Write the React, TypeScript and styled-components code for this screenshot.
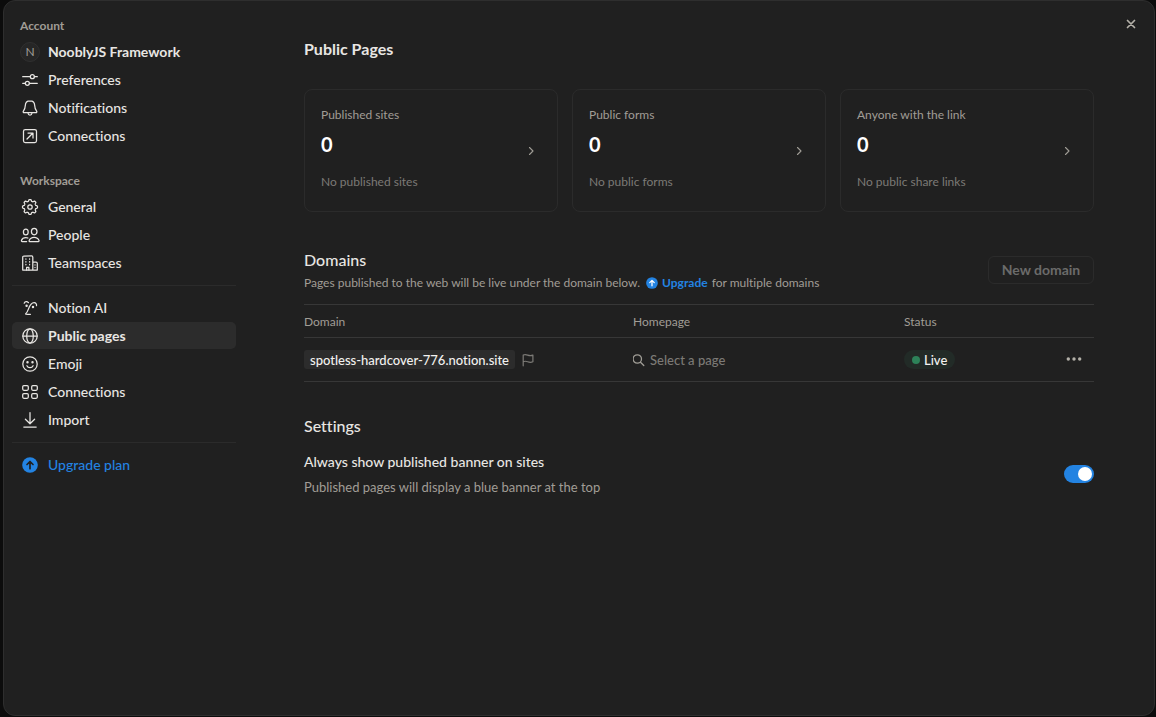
import React, { useState } from "react";
import styled, { createGlobalStyle, css } from "styled-components";

const color = {
  backdrop: "#0c0c0c",
  panel: "#202020",
  panelEdge: "#2e2e2e",
  line: "#373737",
  softLine: "#2b2b2b",
  raised: "#2c2c2c",
  text: "#e8e6e3",
  strong: "#f2f1ef",
  muted: "#a09d96",
  faint: "#7c7a76",
  disabled: "#6b6b6a",
  blue: "#2383e2",
};

const GlobalStyle = createGlobalStyle`
  *, *::before, *::after { box-sizing: border-box; }
  body {
    margin: 0;
    background: ${color.backdrop};
    color: ${color.text};
    font-family: Lato, "Open Sans", sans-serif;
    font-size: 14px;
    line-height: 20px;
    font-variant-ligatures: none;
  }
  button, input { font: inherit; color: inherit; }
  h1, h2, h3, p { margin: 0; }
`;

const Dialog = styled.div`
  position: relative;
  display: flex;
  min-height: calc(100vh - 1px);
  margin: 0 1px 1px 3px;
  background: ${color.panel};
  border: 1px solid ${color.panelEdge};
  border-radius: 12px;
`;

const Sidebar = styled.nav`
  flex: 0 0 240px;
  padding: 15px 8px;
`;

const GroupLabel = styled.h3<{ $spaced?: boolean }>`
  padding: 0 8px;
  margin: ${(p) => (p.$spaced ? "22px 0 2px" : "0 0 2px")};
  font-size: 12px;
  font-weight: 700;
  line-height: 20px;
  color: ${color.muted};
`;

const NavList = styled.ul`
  margin: 0;
  padding: 0;
  list-style: none;
`;

const NavLink = styled.a<{ $active?: boolean; $strong?: boolean; $accent?: boolean }>`
  display: flex;
  align-items: center;
  gap: 8px;
  height: 27px;
  margin-bottom: 1px;
  padding: 0 8px;
  border-radius: 5px;
  color: ${(p) => (p.$accent ? color.blue : color.text)};
  font-weight: ${(p) => (p.$active || p.$strong ? 700 : 500)};
  text-decoration: none;
  ${(p) =>
    p.$active &&
    css`
      background: ${color.raised};
    `}
  svg { flex: none; }
`;

const NavDivider = styled.hr`
  height: 1px;
  margin: 9px 0 8px;
  border: 0;
  background: ${color.softLine};
`;

const Avatar = styled.span`
  display: grid;
  place-items: center;
  flex: none;
  width: 20px;
  height: 20px;
  border: 1px solid #303030;
  border-radius: 50%;
  background: #262626;
  color: ${color.muted};
  font-size: 12px;
  font-weight: 400;
  line-height: 18px;
`;

const CloseButton = styled.button`
  position: absolute;
  top: 13px;
  right: 13px;
  display: grid;
  place-items: center;
  width: 20px;
  height: 20px;
  padding: 0;
  border: 0;
  background: none;
  color: #b3b0a8;
`;

const Main = styled.main`
  flex: 1;
  min-width: 0;
  padding: 36px 60px;
`;

const PageTitle = styled.h1`
  font-size: 16px;
  font-weight: 700;
  line-height: 24px;
`;

const Cards = styled.div`
  display: grid;
  grid-template-columns: repeat(3, 1fr);
  gap: 14px;
  margin-top: 28px;
`;

const Card = styled.button`
  display: flex;
  align-items: center;
  justify-content: space-between;
  padding: 15px 16px;
  border: 1px solid ${color.softLine};
  border-radius: 8px;
  background: none;
  text-align: left;
  svg { margin-right: 4px; color: ${color.muted}; }
`;

const CardBody = styled.span`
  display: flex;
  flex-direction: column;
`;

const CardLabel = styled.span`
  font-size: 12px;
  line-height: 20px;
  color: ${color.muted};
`;

const CardCount = styled.span`
  margin: 5px 0 14px;
  font-size: 20px;
  font-weight: 700;
  line-height: 28px;
  color: #fff;
`;

const CardNote = styled(CardLabel)`
  padding-bottom: 4px;
  color: ${color.faint};
`;

const SectionHead = styled.div`
  display: flex;
  align-items: flex-start;
  justify-content: space-between;
  margin-top: 36px;
`;

const SectionTitle = styled.h2`
  font-size: 16px;
  font-weight: 500;
  line-height: 24px;
  color: ${color.text};
`;

const Hint = styled.p`
  display: flex;
  align-items: center;
  flex-wrap: wrap;
  font-size: 12px;
  line-height: 22px;
  color: ${color.muted};
`;

const UpgradeLink = styled.a`
  display: inline-flex;
  align-items: center;
  gap: 4px;
  margin: 0 4px 0 6px;
  color: ${color.blue};
  font-weight: 700;
  text-decoration: none;
`;

const NewDomain = styled.button`
  flex: none;
  min-width: 106px;
  height: 28px;
  margin-top: 8px;
  padding: 0 12px;
  border: 1px solid ${color.softLine};
  border-radius: 6px;
  background: none;
  color: ${color.disabled};
  font-weight: 700;
  line-height: 20px;
`;

const Table = styled.table`
  width: 100%;
  margin-top: 10px;
  border-collapse: collapse;
  table-layout: fixed;
  th, td {
    padding: 0;
    border-top: 1px solid ${color.line};
    border-bottom: 1px solid ${color.line};
    text-align: left;
    vertical-align: middle;
  }
  th {
    height: 33px;
    padding-top: 2px;
    font-size: 12px;
    font-weight: 400;
    color: ${color.muted};
  }
  td {
    height: 44px;
    font-size: 13px;
    font-weight: 500;
  }
`;

const Col = styled.col<{ $width?: number }>`
  ${(p) => p.$width && `width: ${p.$width}px;`}
`;

const CellRow = styled.div`
  display: flex;
  align-items: center;
  gap: 6px;
`;

const DomainTag = styled.span`
  height: 19px;
  padding: 0 6px;
  border-radius: 3px;
  background: ${color.raised};
  color: ${color.strong};
  line-height: 20px;
`;

const PagePicker = styled.button`
  display: flex;
  align-items: center;
  gap: 3px;
  padding: 0;
  border: 0;
  background: none;
  color: ${color.faint};
  svg { color: ${color.muted}; }
`;

const Live = styled.span`
  display: flex;
  align-items: center;
  gap: 4px;
  width: max-content;
  height: 19px;
  padding: 0 8px;
  border-radius: 10px;
  background: #222b27;
  color: ${color.strong};
  line-height: 20px;
  &::before {
    content: "";
    width: 8px;
    height: 8px;
    border-radius: 50%;
    background: #2d8259;
  }
`;

const MoreButton = styled.button`
  display: grid;
  place-items: center;
  width: 40px;
  height: 24px;
  margin: 0 0 2px auto;
  padding: 0;
  border: 0;
  background: none;
  color: #b3b0a8;
`;

const Settings = styled.section`
  margin-top: 32px;
`;

const SettingRow = styled.div`
  display: flex;
  align-items: center;
  justify-content: space-between;
  margin-top: 13px;
`;

const SettingLabel = styled.label`
  display: block;
  margin-bottom: 5px;
  color: ${color.text};
  font-weight: 500;
  line-height: 21px;
`;

const SettingNote = styled.p`
  font-size: 13px;
  line-height: 20px;
  color: ${color.muted};
`;

const Switch = styled.input`
  appearance: none;
  flex: none;
  width: 30px;
  height: 18px;
  margin: 0;
  padding: 2px;
  border-radius: 9px;
  background: #5a5a5a;
  &::before {
    content: "";
    display: block;
    width: 14px;
    height: 14px;
    border-radius: 50%;
    background: #fff;
  }
  &:checked { background: ${color.blue}; }
  &:checked::before { margin-left: 12px; }
`;

type IconProps = { size?: number; box?: number; weight?: number; children: React.ReactNode };

const Icon = ({ size = 20, box = 20, weight = 1.25, children }: IconProps) => (
  <svg
    width={size}
    height={size}
    viewBox={`0 0 ${box} ${box}`}
    fill="none"
    stroke="currentColor"
    strokeWidth={weight}
    strokeLinecap="round"
    strokeLinejoin="round"
    aria-hidden="true"
  >
    {children}
  </svg>
);

// Eight-toothed outline, sampled around the centre of the 20px box.
const gearOutline =
  Array.from({ length: 96 }, (_, i) => {
    const angle = (i / 96) * Math.PI * 2;
    const wave = Math.max(-1, Math.min(1, Math.cos(angle * 8) * 1.8));
    const r = 6.7 + wave * 0.8;
    return `${i ? "L" : "M"}${(10 + r * Math.cos(angle)).toFixed(2)} ${(10 + r * Math.sin(angle)).toFixed(2)}`;
  }).join("") + "Z";

const SlidersIcon = () => (
  <Icon>
    <path d="M2.7 6.7h7.6M14.4 6.7h2.9M2.7 13.3h2.6M9.4 13.3h7.9" />
    <circle cx="12.35" cy="6.7" r="2" />
    <circle cx="7.35" cy="13.3" r="2" />
  </Icon>
);
const BellIcon = () => (
  <Icon>
    <path d="M10 2.900c-2.800 0-4.600 2-4.700 4.700-.1 3-.8 4.200-1.900 5.600-.5.700-.2 1.500.7 1.500h11.800c.9 0 1.200-.8.700-1.500-1.100-1.400-1.800-2.600-1.900-5.600C14.600 4.900 12.800 2.900 10 2.900Z" />
    <path d="M8 15c.2 1.500.9 2.200 2 2.200s1.800-.7 2-2.200" />
  </Icon>
);
const ArrowBoxIcon = () => (
  <Icon>
    <rect x="3.500" y="3.500" width="13" height="13" rx="1.800" />
    <path d="M7 13l5.700-5.700M8 7h5v5" />
  </Icon>
);
const GearIcon = () => (
  <Icon>
    <path d={gearOutline} />
    <circle cx="10" cy="10" r="2.200" />
  </Icon>
);
const PeopleIcon = () => (
  <Icon>
    <ellipse cx="5.800" cy="7" rx="2.400" ry="2.900" />
    <ellipse cx="14.200" cy="6.600" rx="2.800" ry="3.200" />
    <path d="M9.600 16.500h8.700c.6 0 .9-.5.7-1.100-.7-1.900-2.600-3.100-4.900-3.100s-4.200 1.200-4.900 3.100c-.2.600 0 1.100.4 1.100Z" />
    <path d="M7.900 13c-.6-.3-1.300-.5-2.100-.5-2 0-3.700 1.100-4.300 2.800-.2.600.1 1.200.7 1.200h4.400" />
  </Icon>
);
const BuildingIcon = () => (
  <Icon>
    <path d="M2.700 17V4.200c0-.7.5-1.200 1.200-1.200h7.700c.7 0 1.200.5 1.200 1.200V17ZM12.800 9.200h3.300c.7 0 1.200.5 1.200 1.200V17h-4.500" />
    <path d="M6.600 17v-2.600h2.300V17" />
    <path d="M5.900 5.800v.4M9.600 5.800v.4M5.900 8.600v.4M9.600 8.600v.4M5.900 11.400v.4M9.600 11.400v.4M15 11.800v.3M15 14.300v.3" />
  </Icon>
);
const AiFaceIcon = () => (
  <Icon>
    <path d="M4.200 5.200c.5-1.300 1.500-1.800 2.600-1.500.6.200 1.100.6 1.600.9M16.500 7.600c.3-1.600-.7-2.800-2.300-2.900-3-.1-4.600 3.200-5.700 6.200-.7 1.900-1.500 3.900-2.600 4.600-.4.300-.2.600.2.700 1.500.300 3 .3 4.300.2" />
    <circle cx="6.600" cy="7.800" r=".6" fill="currentColor" />
    <circle cx="13" cy="8.900" r=".6" fill="currentColor" />
  </Icon>
);
const GlobeIcon = () => (
  <Icon>
    <circle cx="10" cy="10" r="7.200" />
    <ellipse cx="10" cy="10" rx="3.300" ry="7.200" />
    <path d="M2.800 10h14.400" />
  </Icon>
);
const SmileIcon = () => (
  <Icon>
    <circle cx="10" cy="10" r="7.200" />
    <path d="M6.900 11.700c.6 1.300 1.700 2 3.100 2s2.500-.7 3.100-2" />
    <circle cx="7.500" cy="8.300" r=".6" fill="currentColor" />
    <circle cx="12.500" cy="8.300" r=".6" fill="currentColor" />
  </Icon>
);
const GridIcon = () => (
  <Icon>
    <rect x="2.700" y="3.500" width="5.600" height="4.800" rx="1.200" />
    <rect x="11.700" y="3.500" width="5.600" height="4.800" rx="1.200" />
    <rect x="2.700" y="11.500" width="5.600" height="4.800" rx="1.200" />
    <rect x="11.700" y="11.500" width="5.600" height="4.800" rx="1.200" />
  </Icon>
);
const ImportIcon = () => (
  <Icon>
    <path d="M10 2.500v11M5.400 9.200 10 13.800l4.600-4.600M3.800 17h12.400" />
  </Icon>
);
const UpgradeIcon = ({ size = 20, arrow = color.panel }: { size?: number; arrow?: string }) => (
  <svg width={size} height={size} viewBox={size === 20 ? "0 0 20 20" : "2 2 16 16"} fill="none" aria-hidden="true">
    <circle cx="10" cy="10" r="7.800" fill={color.blue} />
    <path
      d="M10 13.700V6.800M7 9.500l3-3 3 3"
      stroke={arrow}
      strokeWidth="1.700"
      strokeLinecap="round"
      strokeLinejoin="round"
    />
  </svg>
);
const FlagIcon = styled.svg`
  color: ${color.faint};
`;

const Flag = () => (
  <FlagIcon
    width="14"
    height="14"
    viewBox="0 0 14 14"
    fill="none"
    stroke="currentColor"
    strokeWidth="1.200"
    strokeLinecap="round"
    strokeLinejoin="round"
    aria-hidden="true"
  >
    <path d="M2.200 12.800V2c1.300-.6 2.800-.6 4.500.1 1.800.700 3.500.7 5.200 0v6.700c-1.700.7-3.400.7-5.200 0-1.700-.7-3.200-.7-4.500-.1" />
  </FlagIcon>
);

type NavItem = { label: string; icon: React.ReactNode; active?: boolean; strong?: boolean; accent?: boolean };

const accountItems: NavItem[] = [
  { label: "NooblyJS Framework", icon: <Avatar aria-hidden="true">N</Avatar>, strong: true },
  { label: "Preferences", icon: <SlidersIcon /> },
  { label: "Notifications", icon: <BellIcon /> },
  { label: "Connections", icon: <ArrowBoxIcon /> },
];
const workspaceItems: NavItem[] = [
  { label: "General", icon: <GearIcon /> },
  { label: "People", icon: <PeopleIcon /> },
  { label: "Teamspaces", icon: <BuildingIcon /> },
];
const featureItems: NavItem[] = [
  { label: "Notion AI", icon: <AiFaceIcon /> },
  { label: "Public pages", icon: <GlobeIcon />, active: true },
  { label: "Emoji", icon: <SmileIcon /> },
  { label: "Connections", icon: <GridIcon /> },
  { label: "Import", icon: <ImportIcon /> },
];
const planItems: NavItem[] = [{ label: "Upgrade plan", icon: <UpgradeIcon />, accent: true }];

const cards = [
  { label: "Published sites", count: 0, note: "No published sites" },
  { label: "Public forms", count: 0, note: "No public forms" },
  { label: "Anyone with the link", count: 0, note: "No public share links" },
];

const NavGroup = ({ items }: { items: NavItem[] }) => (
  <NavList>
    {items.map((item) => (
      <li key={item.label}>
        <NavLink
          href="#"
          $active={item.active}
          $strong={item.strong}
          $accent={item.accent}
          aria-current={item.active ? "page" : undefined}
        >
          {item.icon}
          {item.label}
        </NavLink>
      </li>
    ))}
  </NavList>
);

export default function App() {
  const [banner, setBanner] = useState(true);

  return (
    <>
      <GlobalStyle />
      <Dialog role="dialog" aria-label="Settings">
        <Sidebar>
          <GroupLabel>Account</GroupLabel>
          <NavGroup items={accountItems} />
          <GroupLabel $spaced>Workspace</GroupLabel>
          <NavGroup items={workspaceItems} />
          <NavDivider />
          <NavGroup items={featureItems} />
          <NavDivider />
          <NavGroup items={planItems} />
        </Sidebar>

        <Main>
          <PageTitle>Public Pages</PageTitle>

          <Cards>
            {cards.map((card) => (
              <Card key={card.label} type="button">
                <CardBody>
                  <CardLabel>{card.label}</CardLabel>
                  <CardCount>{card.count}</CardCount>
                  <CardNote>{card.note}</CardNote>
                </CardBody>
                <Icon size={12} box={12} weight={1.1}>
                  <path d="M4.500 2.500 8 6 4.500 9.500" />
                </Icon>
              </Card>
            ))}
          </Cards>

          <SectionHead>
            <div>
              <SectionTitle>Domains</SectionTitle>
              <Hint>
                Pages published to the web will be live under the domain below.
                <UpgradeLink href="#">
                  <UpgradeIcon size={12} arrow="#fff" />
                  Upgrade
                </UpgradeLink>
                for multiple domains
              </Hint>
            </div>
            <NewDomain type="button" disabled>
              New domain
            </NewDomain>
          </SectionHead>

          <Table>
            <colgroup>
              <Col />
              <Col $width={271} />
              <Col $width={131} />
              <Col $width={59} />
            </colgroup>
            <thead>
              <tr>
                <th scope="col">Domain</th>
                <th scope="col">Homepage</th>
                <th scope="col">Status</th>
                <th aria-label="Actions" />
              </tr>
            </thead>
            <tbody>
              <tr>
                <td>
                  <CellRow>
                    <DomainTag>spotless-hardcover-776.notion.site</DomainTag>
                    <Flag />
                  </CellRow>
                </td>
                <td>
                  <PagePicker type="button">
                    <Icon size={14} box={14} weight={1.3}>
                      <circle cx="4.300" cy="6" r="4.200" />
                      <path d="M7.500 9.200 10.800 12.500" />
                    </Icon>
                    Select a page
                  </PagePicker>
                </td>
                <td>
                  <Live>Live</Live>
                </td>
                <td>
                  <MoreButton type="button" aria-label="More options">
                    <svg width="16" height="16" viewBox="0 0 16 16" fill="currentColor" aria-hidden="true">
                      <circle cx="2.300" cy="8" r="1.700" />
                      <circle cx="8" cy="8" r="1.700" />
                      <circle cx="13.700" cy="8" r="1.700" />
                    </svg>
                  </MoreButton>
                </td>
              </tr>
            </tbody>
          </Table>

          <Settings>
            <SectionTitle>Settings</SectionTitle>
            <SettingRow>
              <div>
                <SettingLabel htmlFor="banner">Always show published banner on sites</SettingLabel>
                <SettingNote>Published pages will display a blue banner at the top</SettingNote>
              </div>
              <Switch
                id="banner"
                type="checkbox"
                role="switch"
                checked={banner}
                onChange={(e) => setBanner(e.target.checked)}
              />
            </SettingRow>
          </Settings>
        </Main>

        <CloseButton type="button" aria-label="Close">
          <Icon size={10} box={10} weight={1.7}>
            <path d="M1.500 1.500l7 7M8.500 1.500l-7 7" />
          </Icon>
        </CloseButton>
      </Dialog>
    </>
  );
}
